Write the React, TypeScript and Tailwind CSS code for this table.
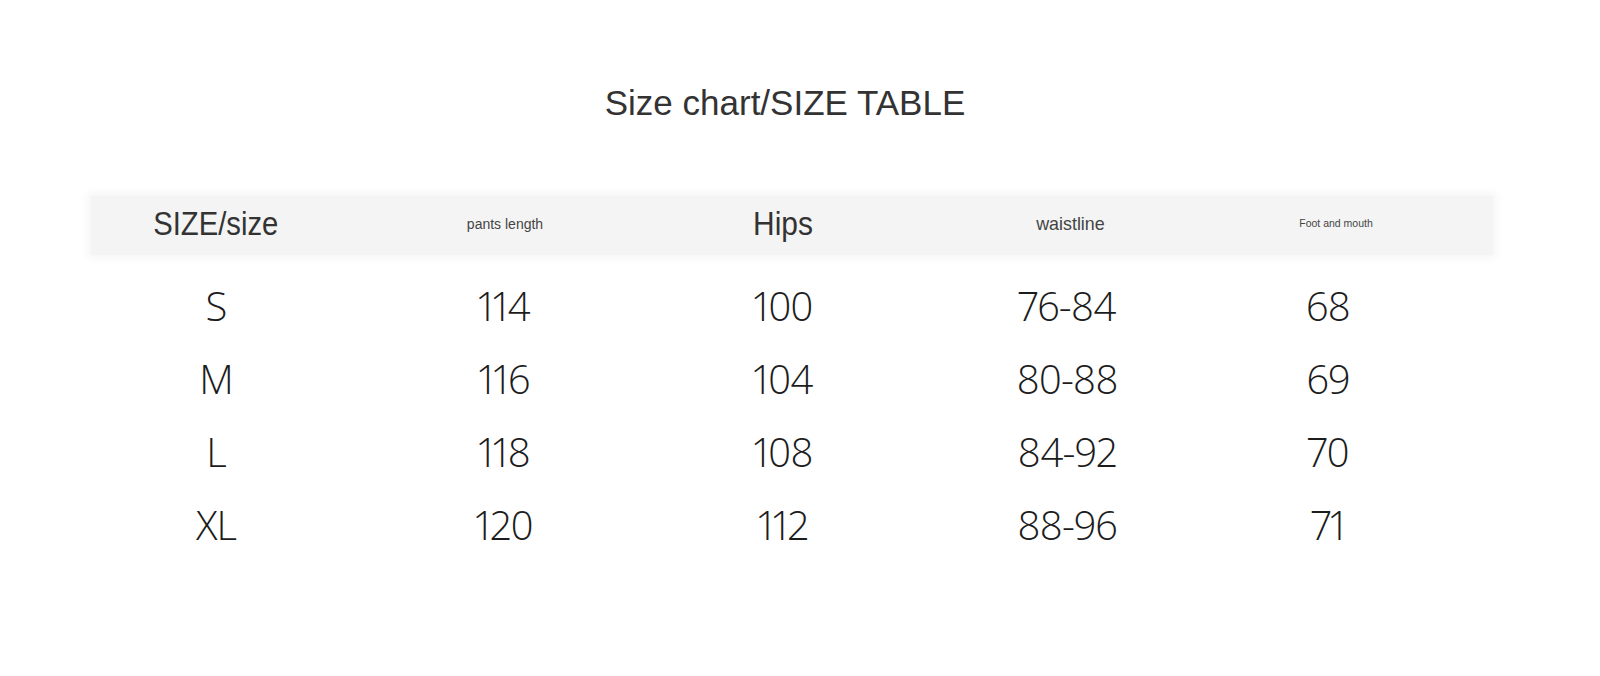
import React from 'react';

// Size table rows: size, pants length, hips, waistline, foot and mouth
const rows: string[][] = [
  ['S', '114', '100', '76-84', '68'],
  ['M', '116', '104', '80-88', '69'],
  ['L', '118', '108', '84-92', '70'],
  ['XL', '120', '112', '88-96', '71'],
];

export default function App() {
  return (
    <main className="w-[1600px] h-[676px] bg-white overflow-hidden font-['Liberation_Sans',Arial,sans-serif] text-[#333]">
      {/* Title */}
      <div className="pt-[83px] pr-[30px] flex justify-center">
        <h1 className="text-[35px] leading-[40px] text-[#333]">Size chart/SIZE TABLE</h1>
      </div>

      {/* Header band */}
      <div className="mt-[73px] ml-[91px] w-[1402px] h-[59px] bg-[#f4f4f4] shadow-[0_0_8px_4px_#f7f7f7] grid grid-cols-[250px_328px_228px_346px_186px]">
        <div className="flex items-center justify-center pb-[6px]">
          <span className="text-[34px] leading-none scale-x-[0.86] text-[#333]">SIZE/size</span>
        </div>
        <div className="flex items-center justify-center pb-[4px]">
          <span className="text-[14px] leading-none text-[#444]">pants length</span>
        </div>
        <div className="flex items-center justify-center pb-[6px]">
          <span className="text-[34px] leading-none scale-x-[0.88] text-[#333]">Hips</span>
        </div>
        <div className="flex items-center justify-center pb-[4px]">
          <span className="text-[19px] leading-none scale-x-[0.94] text-[#444]">waistline</span>
        </div>
        <div className="flex items-center justify-center pb-[4px]">
          <span className="text-[10.5px] leading-none text-[#444]">Foot and mouth</span>
        </div>
      </div>

      {/* Data rows */}
      <div className="mt-[14px] ml-[72px] w-[1368px] flex flex-col">
        {rows.map((row) => (
          <div key={row[0]} className="h-[73px] grid grid-cols-[288px_288px_270px_298px_224px]">
            {row.map((cell, i) => (
              <div key={i} className="flex items-center justify-center">
                <span className="font-['Open_Sans',sans-serif] font-[350] text-[40px] leading-none tracking-[-1px] proportional-nums text-[#1c1c1c]">
                  {cell}
                </span>
              </div>
            ))}
          </div>
        ))}
      </div>
    </main>
  );
}
